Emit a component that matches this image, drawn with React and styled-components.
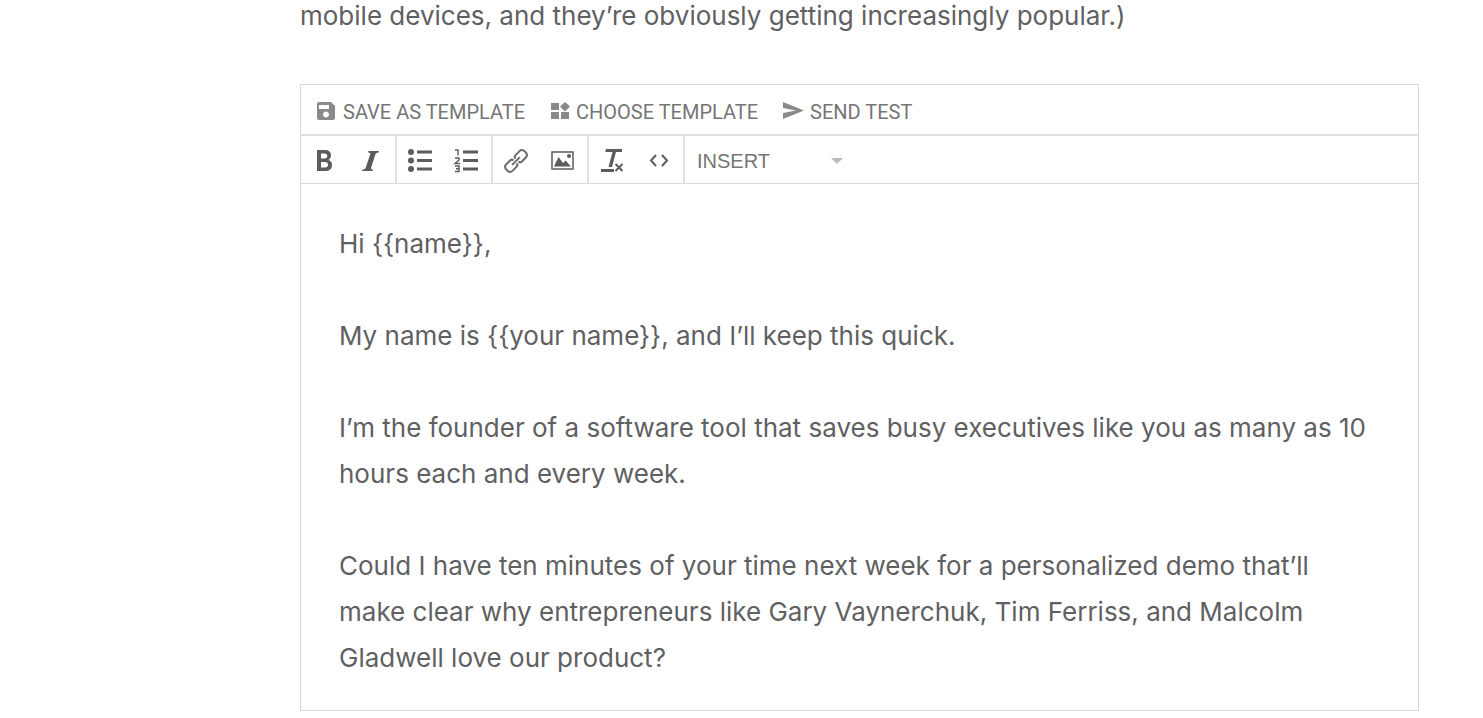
import React from 'react';
import styled, { createGlobalStyle } from 'styled-components';

const GlobalStyle = createGlobalStyle`
  * {
    box-sizing: border-box;
  }
  body {
    margin: 0;
    background: #fff;
    color: #5f6062;
    font-family: Inter, sans-serif;
    font-size: 26px;
    line-height: 46px;
  }
`;

const icons = {
  save: <path d="M2 0h12l4 4v12q0 2-2 2H2q-2 0-2-2V2q0-2 2-2zM2 3v4h10V3zM9 9.500a3 3 0 1 0 .01 0z" fillRule="evenodd" />,
  widgets: <path d="M1 1h8v7H1zM1 10h8v7H1zM11 10h8v7h-8zM15 0l5 4.500-5 5-5-5z" />,
  send: <path d="M0 0l21 8.500L0 17v-6l13-2.500L0 6z" />,
  bold: <path d="M0 0h8q6 0 6 5.500 0 3-2.500 4.500 3.500 1.200 3.500 5 0 6-7 6H0zM4 3.500v5h3.500q2.800 0 2.800-2.500T7.500 3.500zM4 12v5.500h4q3 0 3-2.700T8 12z" fillRule="evenodd" />,
  italic: <path d="M6.500 0H17l-.4 1.500q-2.600 0-3.100 1.500L9 17q-.4 1.500 2 1.500l-.4 1.500H0l.4-1.500q2.600 0 3.200-1.500L8.300 3q.4-1.500-2.200-1.500z" />,
  bullets: (
    <>
      <circle cx="3" cy="3" r="3" />
      <circle cx="3" cy="11.500" r="3" />
      <circle cx="3" cy="20" r="3" />
      <path d="M9 1.500h15v3H9zM9 10h15v3H9zM9 18.500h15v3H9z" />
    </>
  ),
  numbers: (
    <>
      <path d="M8 1.500h15v3H8zM8 10h15v3H8zM8 18.500h15v3H8z" />
      <path d="M0 1h3v5.500M0 9h4v2l-4 3.500h5M0 17h4v5.500H0M1 19.700h3" fill="none" stroke="currentColor" strokeWidth="1.400" />
    </>
  ),
  link: (
    <g transform="rotate(-45 12 12)" fill="none" stroke="#6c6c6c" strokeWidth="2">
      <path d="M10.500 10V9.500q0-2-2-2H2.500q-3.500 0-3.500 4.500t3.500 4.500h6q2 0 2-2V14" />
      <path d="M13.500 10V9.500q0-2 2-2h6q3.500 0 3.500 4.500t-3.500 4.500h-6q-2 0-2-2V14" />
      <path d="M6.500 12h11" />
    </g>
  ),
  image: (
    <>
      <path d="M1 1h21v17H1z" fill="none" stroke="currentColor" strokeWidth="1.500" />
      <path d="M3 15.500L7.500 6l4.500 6 2.500-2.500L20 15.500z" />
      <circle cx="18" cy="5" r="2" />
    </>
  ),
  clear: (
    <>
      <path d="M5 0h16v3h-6l-4 15H7.500l4-15H4.300zM0 20h13v3H0z" />
      <path d="M14.500 15l7 7M21.500 15l-7 7" stroke="currentColor" strokeWidth="2" />
    </>
  ),
  code: <path d="M7 1L2 6.500 7 12M13 1l5 5.500L13 12" fill="none" stroke="currentColor" strokeWidth="2" />,
};

function Icon({ name, width, height }) {
  return (
    <svg width={width} height={height} viewBox={`0 0 ${width} ${height}`} fill="currentColor" aria-hidden="true">
      {icons[name]}
    </svg>
  );
}

function App() {
  return (
    <Article>
      <GlobalStyle />
      <Intro>mobile devices, and they’re obviously getting increasingly popular.)</Intro>
      <Editor>
        <TemplateBar>
          <TextButton type="button"><Icon name="save" width={19} height={20} />SAVE AS TEMPLATE</TextButton>
          <TextButton type="button"><Icon name="widgets" width={19} height={20} />CHOOSE TEMPLATE</TextButton>
          <TextButton type="button"><Icon name="send" width={20} height={20} />SEND TEST</TextButton>
        </TemplateBar>
        <FormatBar>
          <Group>
            <IconButton type="button" aria-label="Bold"><Icon name="bold" width={15} height={21} /></IconButton>
            <IconButton type="button" aria-label="Italic"><Icon name="italic" width={17} height={20} /></IconButton>
          </Group>
          <Group>
            <IconButton type="button" aria-label="Bulleted list"><Icon name="bullets" width={24} height={23} /></IconButton>
            <IconButton type="button" aria-label="Numbered list"><Icon name="numbers" width={23} height={23} /></IconButton>
          </Group>
          <Group>
            <IconButton type="button" aria-label="Link"><Icon name="link" width={24} height={24} /></IconButton>
            <IconButton type="button" aria-label="Image"><Icon name="image" width={23} height={19} /></IconButton>
          </Group>
          <Group>
            <IconButton type="button" aria-label="Clear formatting"><Icon name="clear" width={23} height={23} /></IconButton>
            <IconButton type="button" aria-label="Source code"><Icon name="code" width={20} height={13} /></IconButton>
          </Group>
          <InsertField>
            <InsertSelect aria-label="Insert" defaultValue="INSERT">
              <option>INSERT</option>
            </InsertSelect>
            <Caret />
          </InsertField>
        </FormatBar>
        <Message>
          <p>Hi {'{{name}}'},</p>
          <p>My name is {'{{your name}}'}, and I’ll keep this quick.</p>
          <p>I’m the founder of a software tool that saves busy executives like you as many as 10<br />hours each and every week.</p>
          <p>Could I have ten minutes of your time next week for a personalized demo that’ll<br />make clear why entrepreneurs like Gary Vaynerchuk, Tim Ferriss, and Malcolm<br />Gladwell love our product?</p>
        </Message>
      </Editor>
    </Article>
  );
}

export default App;

const Article = styled.article`
  margin: 0 64px 0 300px;
  padding-bottom: 7px;
`;
const Intro = styled.p`
  margin: 0 0 52px;
  line-height: 32px;
`;
const Editor = styled.section`
  border: 1px solid #d8d8d8;
`;
const TemplateBar = styled.div`
  display: flex;
  align-items: center;
  gap: 25px;
  height: 49px;
  padding: 4px 16px 0;
`;
const TextButton = styled.button`
  display: flex;
  align-items: center;
  gap: 7px;
  padding: 0;
  border: 0;
  background: none;
  color: #757575;
  font: 20px/24px Roboto, sans-serif;
  svg {
    color: #8a8a8a;
    overflow: visible;
  }
`;
const FormatBar = styled.div`
  display: flex;
  border: solid #e0e0e0;
  border-width: 2px 0 1px;
  border-bottom-color: #d8d8d8;
  height: 50px;
`;
const Group = styled.div`
  display: flex;
  width: 96px;
  padding-right: 1px;
  border-right: 2px solid #e0e0e0;
`;
const IconButton = styled.button`
  display: flex;
  align-items: center;
  justify-content: center;
  flex: 1;
  padding: 2px 0 0;
  border: 0;
  background: none;
  color: #5c5c5c;
  svg {
    overflow: visible;
  }
`;
const InsertField = styled.div`
  display: flex;
  align-items: center;
  width: 158px;
  padding: 2px 0 0 12px;
`;
const InsertSelect = styled.select`
  appearance: none;
  flex: 1;
  padding: 0;
  border: 0;
  background: none;
  color: #757575;
  font: 20px/24px "Liberation Sans", Arial, sans-serif;
`;
const Caret = styled.span`
  border: solid transparent;
  border-width: 6px 6px 0;
  border-top-color: #b8bcc0;
`;
const Message = styled.div`
  padding: 37px 38px 29px;
  p {
    margin: 0 0 46px;
  }
  p:last-child {
    margin: 0;
  }
`;
